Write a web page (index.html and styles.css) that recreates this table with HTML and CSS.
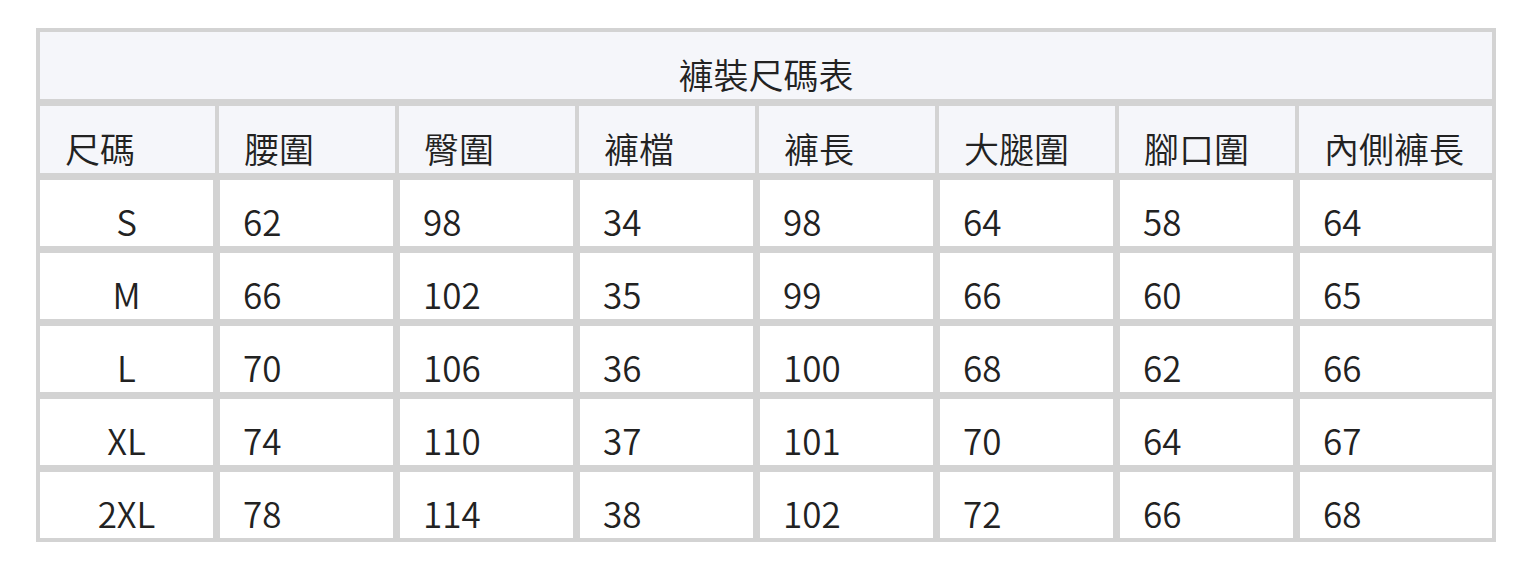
FILE: index.html
```html
<!DOCTYPE html>
<html lang="zh-Hant">
<head>
<meta charset="utf-8">
<title>褲裝尺碼表</title>
<link rel="stylesheet" href="styles.css">
</head>
<body>
<div class="chart">
  <div class="title">褲裝尺碼表</div>
  <div class="row head">
    <div class="cell">尺碼</div>
    <div class="cell">腰圍</div>
    <div class="cell">臀圍</div>
    <div class="cell">褲檔</div>
    <div class="cell">褲長</div>
    <div class="cell">大腿圍</div>
    <div class="cell">腳口圍</div>
    <div class="cell">內側褲長</div>
  </div>
  <div class="row body">
    <div class="cell size">S</div><div class="cell">62</div><div class="cell">98</div><div class="cell">34</div><div class="cell">98</div><div class="cell">64</div><div class="cell">58</div><div class="cell">64</div>
  </div>
  <div class="row body">
    <div class="cell size">M</div><div class="cell">66</div><div class="cell">102</div><div class="cell">35</div><div class="cell">99</div><div class="cell">66</div><div class="cell">60</div><div class="cell">65</div>
  </div>
  <div class="row body">
    <div class="cell size">L</div><div class="cell">70</div><div class="cell">106</div><div class="cell">36</div><div class="cell">100</div><div class="cell">68</div><div class="cell">62</div><div class="cell">66</div>
  </div>
  <div class="row body">
    <div class="cell size">XL</div><div class="cell">74</div><div class="cell">110</div><div class="cell">37</div><div class="cell">101</div><div class="cell">70</div><div class="cell">64</div><div class="cell">67</div>
  </div>
  <div class="row body">
    <div class="cell size">2XL</div><div class="cell">78</div><div class="cell">114</div><div class="cell">38</div><div class="cell">102</div><div class="cell">72</div><div class="cell">66</div><div class="cell">68</div>
  </div>
</div>
</body>
</html>
```

FILE: styles.css
```css
html, body {
  margin: 0;
  padding: 0;
  background: #ffffff;
}
body {
  padding: 28px 36px;
  font-family: "Noto Sans CJK TC", "Noto Sans", sans-serif;
  font-weight: 350;
  color: #222222;
}
.chart {
  width: 1460px;
  box-sizing: border-box;
  border: 4px solid #d3d3d3;
  background: #d3d3d3;
  display: flex;
  flex-direction: column;
  gap: 7px;
}
.title {
  height: 67px;
  background: #f5f6fa;
  display: flex;
  align-items: flex-end;
  justify-content: center;
  font-size: 35px;
  line-height: 40px;
  padding-bottom: 5px;
  box-sizing: border-box;
}
.row {
  display: grid;
  height: 67px;
}
.head {
  grid-template-columns: 175px repeat(6, 176px) 1fr;
  column-gap: 4px;
}
.body {
  grid-template-columns: repeat(7, 173px) 1fr;
  column-gap: 7px;
  height: 66px;
}
.cell {
  display: flex;
  align-items: flex-end;
  font-size: 35px;
  line-height: 40px;
  padding: 0 0 5px 25px;
  box-sizing: border-box;
  white-space: nowrap;
}
.head .cell {
  background: #f5f6fa;
}
.body .cell {
  background: #ffffff;
  padding-left: 23px;
}
.body .cell.size {
  justify-content: center;
  padding-left: 0;
}
```
